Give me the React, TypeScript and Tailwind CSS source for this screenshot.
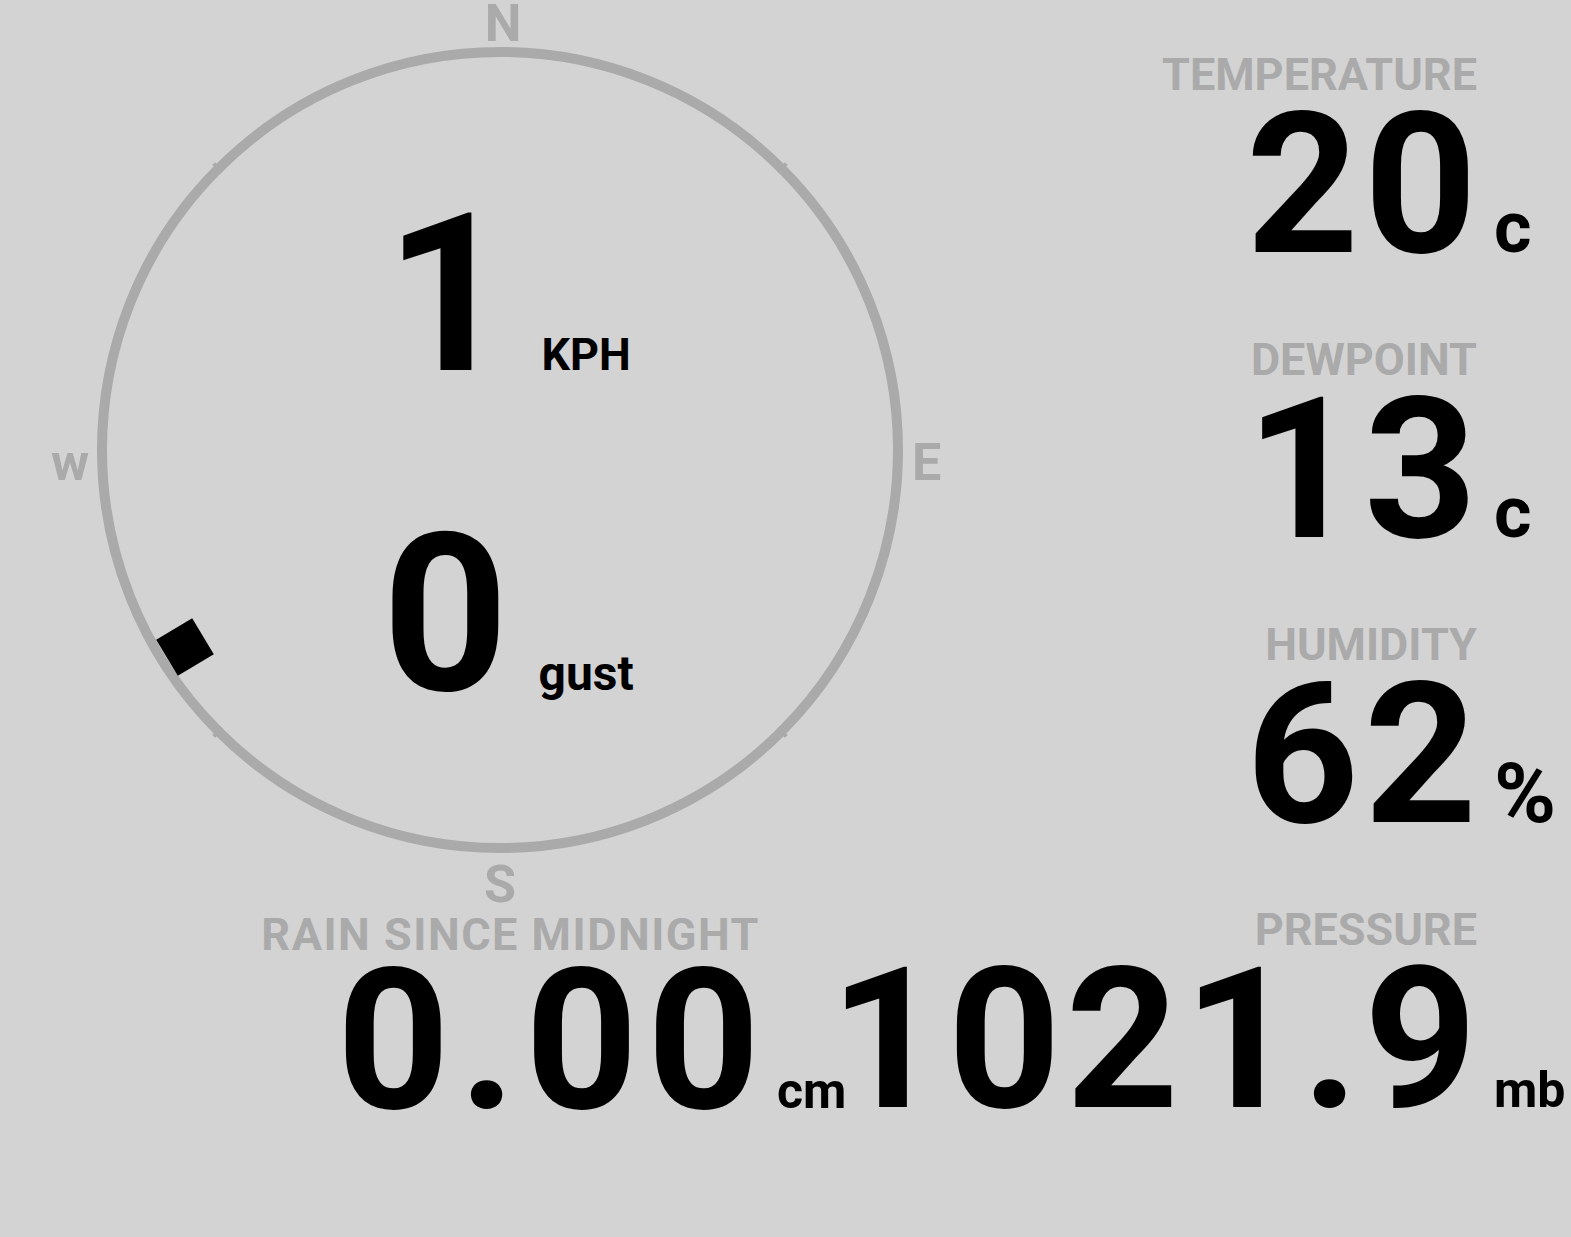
import { ReactNode } from "react";

type StatProps = {
  label: string;
  value: string;
  unit: string;
  unitClass: string;
};

const Stat = ({ label, value, unit, unitClass }: StatProps) => (
  <div className="flex flex-col items-end">
    <div className="text-[45px] leading-[45px] text-[#aaaaaa] uppercase whitespace-nowrap">{label}</div>
    <div className="flex items-baseline text-[197px] leading-[175px] tracking-[5px] text-black -mr-[5px]">
      <span>{value}</span>
      <span className="w-0 whitespace-nowrap tracking-normal">
        <span className={`ml-[12px] leading-none ${unitClass}`}>{unit}</span>
      </span>
    </div>
  </div>
);

const SpeedRow = ({ value, unit }: { value: string; unit: ReactNode }) => (
  <div className="flex items-baseline text-[220px] leading-[220px] text-black">
    <span>{value}</span>
    <span className="ml-[30px] leading-none">{unit}</span>
  </div>
);

// small jogs in the ring at the diagonal points
const notches = [45, 135, 225, 315];

const Compass = () => (
  <svg
    width="960"
    height="907"
    viewBox="0 0 960 907"
    className="col-start-1 row-start-1"
  >
    <circle cx="500" cy="450" r="398" fill="none" stroke="#aaaaaa" strokeWidth="10" />
    {notches.map((deg) => (
      <rect
        key={deg}
        x="-2"
        y="-6"
        width="4"
        height="12"
        fill="#aaaaaa"
        transform={`translate(500 450) rotate(${deg}) translate(0 -399)`}
      />
    ))}
    <g fill="#aaaaaa" fontFamily="Roboto, sans-serif" fontWeight="700" fontSize="52">
      <text x="503" y="41" textAnchor="middle">N</text>
      <text x="912" y="480">E</text>
      <text x="500" y="902" textAnchor="middle">S</text>
      <text x="70" y="480" textAnchor="middle">w</text>
    </g>
    <rect x="-21" y="-21" width="42" height="42" fill="#000" transform="translate(185 647) rotate(-31)" />
  </svg>
);

export default function App() {
  return (
    <div className="h-[1237px] w-full overflow-hidden bg-[#d3d3d3] flex font-[Roboto,sans-serif] font-bold">
      <div className="w-[960px] shrink-0 flex flex-col">
        <div className="grid h-[907px]">
          <Compass />
          <div className="col-start-1 row-start-1 flex flex-col items-center w-[1000px] pt-[185px] pl-[16px] gap-[100px]">
            <SpeedRow value="1" unit={<span className="text-[45px]">KPH</span>} />
            <SpeedRow value="0" unit={<span className="text-[48px]">gust</span>} />
          </div>
        </div>
        <div className="w-[760px] flex flex-col items-end pt-[5px]">
          <div className="text-[45px] leading-[45px] tracking-[1.5px] text-[#aaaaaa] uppercase whitespace-nowrap">Rain since midnight</div>
          <div className="-mt-[4px] flex items-baseline text-[197px] leading-[175px] tracking-[9px] text-black -mr-[9px]">
            <span>0.00</span>
            <span className="w-0 whitespace-nowrap tracking-normal">
              <span className="ml-[8px] leading-none text-[50px]">cm</span>
            </span>
          </div>
        </div>
      </div>
      <div className="flex-1 min-w-0 flex flex-col items-end pt-[52px] pr-[94px] gap-[65px]">
        <Stat label="Temperature" value="20" unit="c" unitClass="text-[72px]" />
        <Stat label="Dewpoint" value="13" unit="c" unitClass="text-[72px]" />
        <Stat label="Humidity" value="62" unit="%" unitClass="text-[84px]" />
        <Stat label="Pressure" value="1021.9" unit="mb" unitClass="text-[50px]" />
      </div>
    </div>
  );
}
